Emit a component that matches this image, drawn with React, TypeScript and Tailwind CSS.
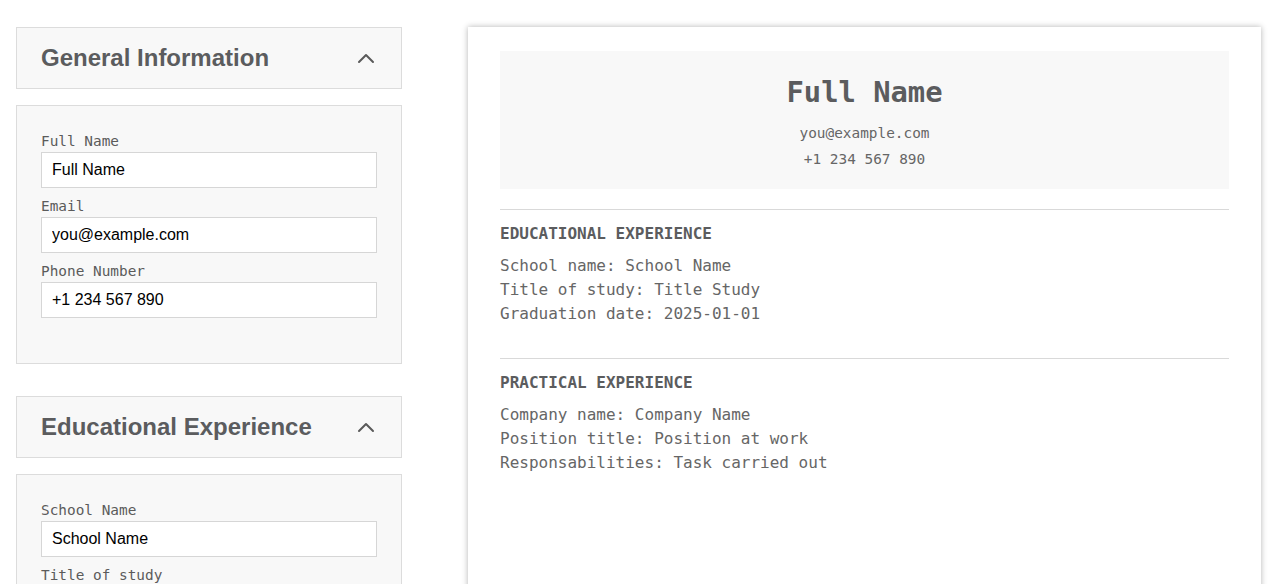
const mono = "font-['DejaVu_Sans_Mono',monospace]";

function Chevron() {
  return (
    <svg width="18" height="12" viewBox="0 0 18 12" className="text-[#5a5a5a]">
      <polyline points="2,10 9,3 16,10" fill="none" stroke="currentColor" strokeWidth="2" strokeLinecap="round" strokeLinejoin="round" />
    </svg>
  );
}

function SectionHeader({ title }: { title: string }) {
  return (
    <div className="flex items-center justify-between h-[62px] pl-6 pr-[26px] bg-[#f8f8f8] border border-[#dcdcdc] mb-4">
      <h2 className="font-['Liberation_Sans',Arial,sans-serif] font-bold text-[24px] text-[#5b5c5e]">{title}</h2>
      <Chevron />
    </div>
  );
}

function Field({ label, value }: { label: string; value: string }) {
  return (
    <div className="mb-[10px]">
      <label className={`${mono} block text-[14.4px] leading-[16px] text-[#5b5b5b] mb-[3px]`}>{label}</label>
      <input
        readOnly
        value={value}
        className="w-full h-[36px] px-[10px] bg-white border border-[#d6d6d6] text-[16px] text-black font-['Liberation_Sans',Arial,sans-serif] outline-none"
      />
    </div>
  );
}

export default function App() {
  return (
    <div className="flex gap-[66px] pl-4 pr-[22px] pt-[27px] bg-white min-h-screen">
      <div className="w-[386px] shrink-0">
        <SectionHeader title="General Information" />
        <div className="bg-[#f8f8f8] border border-[#dcdcdc] pt-[27px] pb-[35px] px-6 mb-8">
          <Field label="Full Name" value="Full Name" />
          <Field label="Email" value="you@example.com" />
          <Field label="Phone Number" value="+1 234 567 890" />
        </div>
        <SectionHeader title="Educational Experience" />
        <div className="bg-[#f8f8f8] border border-[#dcdcdc] pt-[27px] pb-[35px] px-6 mb-8">
          <Field label="School Name" value="School Name" />
          <Field label="Title of study" value="Title Study" />
          <Field label="Graduation date" value="2025-01-01" />
        </div>
      </div>

      <div className={`flex-1 bg-white shadow-[0_0_6px_rgba(0,0,0,0.3)] px-8 pt-6 h-[800px] ${mono}`}>
        <div className="bg-[#f8f8f8] text-center pt-6 pb-[17px]">
          <h1 className="text-[28.8px] leading-[34px] font-bold text-[#5b5c5e] mb-[11px]">Full Name</h1>
          <p className="text-[14.4px] leading-[26px] text-[#666]">you@example.com</p>
          <p className="text-[14.4px] leading-[26px] text-[#666]">+1 234 567 890</p>
        </div>

        <hr className="mt-5 border-t border-[#d9d9d9]" />
        <section className="pt-[12px] pb-[32px]">
          <h3 className="text-[16px] leading-[24px] font-bold text-[#5b5c5e] mb-2">EDUCATIONAL EXPERIENCE</h3>
          <p className="text-[16px] leading-[24px] text-[#666]">School name: School Name</p>
          <p className="text-[16px] leading-[24px] text-[#666]">Title of study: Title Study</p>
          <p className="text-[16px] leading-[24px] text-[#666]">Graduation date: 2025-01-01</p>
        </section>

        <hr className="border-t border-[#d9d9d9]" />
        <section className="pt-[12px]">
          <h3 className="text-[16px] leading-[24px] font-bold text-[#5b5c5e] mb-2">PRACTICAL EXPERIENCE</h3>
          <p className="text-[16px] leading-[24px] text-[#666]">Company name: Company Name</p>
          <p className="text-[16px] leading-[24px] text-[#666]">Position title: Position at work</p>
          <p className="text-[16px] leading-[24px] text-[#666]">Responsabilities: Task carried out</p>
        </section>
      </div>
    </div>
  );
}
